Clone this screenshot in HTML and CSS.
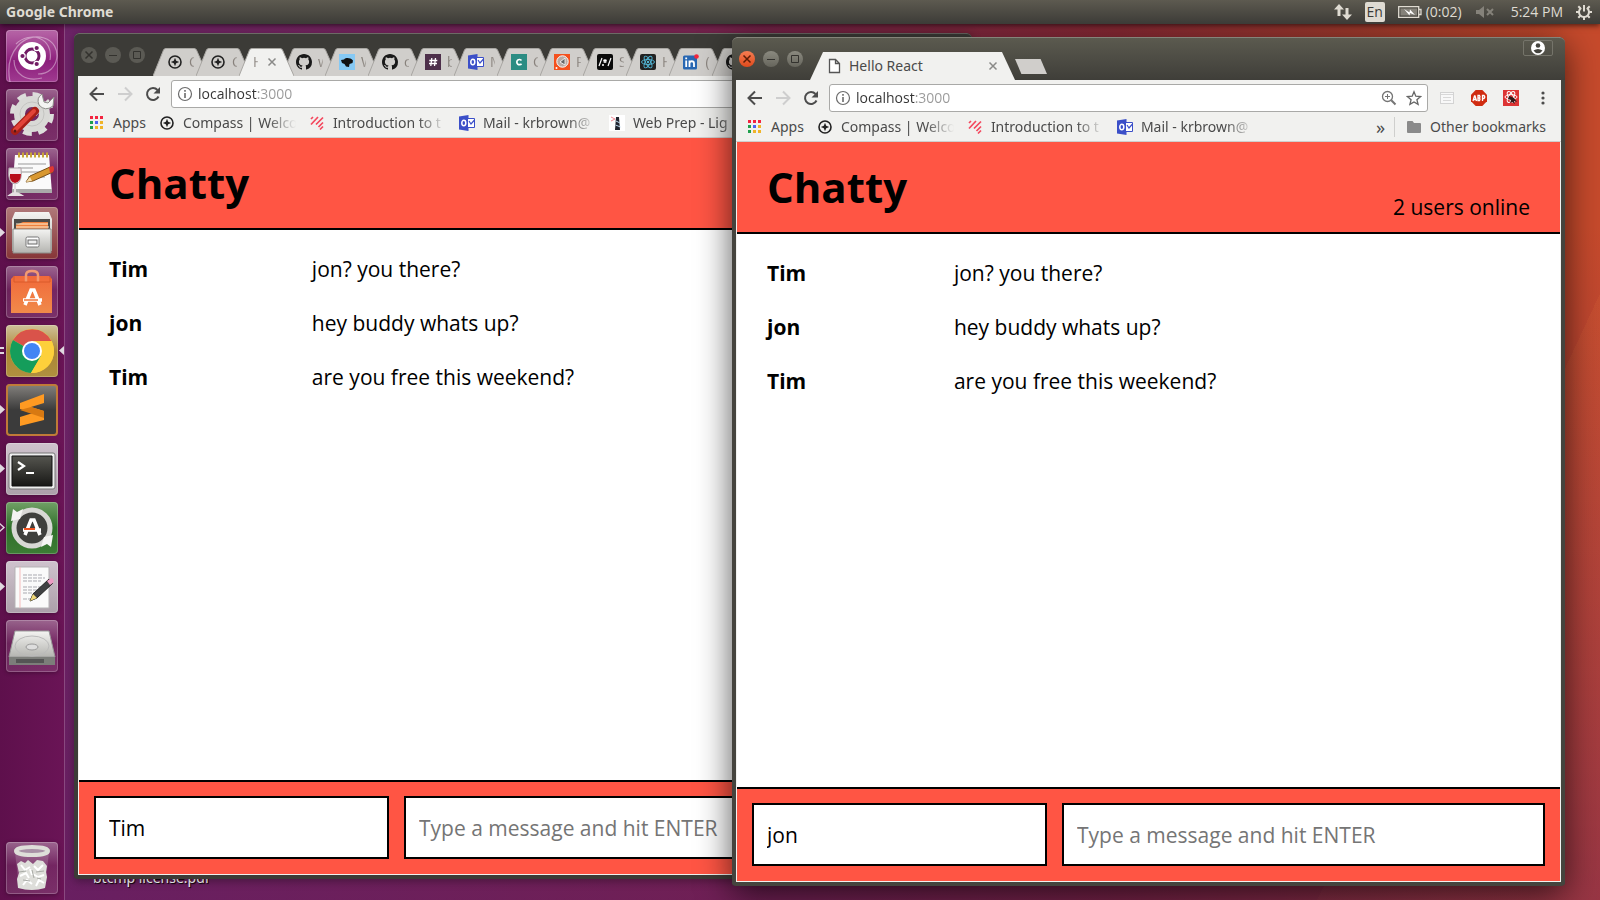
FILE: index.html
```html
<!DOCTYPE html>
<html lang="en">
<head>
<meta charset="utf-8">
<title>Desktop</title>
<link rel="stylesheet" href="styles.css">
</head>
<body>
<svg class="defs" aria-hidden="true">
  <defs>
    <linearGradient id="metal" x1="0" y1="0" x2="0" y2="1"><stop offset="0" stop-color="#f4f4f2"/><stop offset="1" stop-color="#b4b4b0"/></linearGradient>
    <linearGradient id="orange" x1="0" y1="0" x2="0" y2="1"><stop offset="0" stop-color="#f1693a"/><stop offset="1" stop-color="#f08a4a"/></linearGradient>
    <linearGradient id="screen" x1="0" y1="0" x2="0" y2="1"><stop offset="0" stop-color="#55554f"/><stop offset="1" stop-color="#181816"/></linearGradient>
  </defs>
  <symbol id="i-close" viewBox="0 0 16 16"><path d="M4.5 4.500l7 7M11.500 4.500l-7 7" stroke="currentColor" stroke-width="1.500" fill="none"/></symbol>
  <symbol id="i-min" viewBox="0 0 16 16"><path d="M4 8.500h8" stroke="currentColor" fill="none"/></symbol>
  <symbol id="i-max" viewBox="0 0 16 16"><path d="M4.500 4.500h7v7h-7z" stroke="currentColor" fill="none"/></symbol>
  <symbol id="i-back" viewBox="0 0 16 16"><path d="M15 8H2M8 1.500L1.500 8 8 14.500" stroke="currentColor" stroke-width="2" fill="none"/></symbol>
  <symbol id="i-fwd" viewBox="0 0 16 16"><path d="M1 8h13M8 1.500L14.500 8 8 14.500" stroke="currentColor" stroke-width="2" fill="none"/></symbol>
  <symbol id="i-reload" viewBox="0 0 16 16"><path d="M13.500 10.500A6 6 0 1 1 12.500 4" stroke="currentColor" stroke-width="2" fill="none"/><path d="M15 1v6.500H8.500z" fill="currentColor"/></symbol>
  <symbol id="i-info" viewBox="0 0 16 16"><circle cx="8" cy="8" r="6.500" stroke="#6b6b6b" fill="none" stroke-width="1.200"/><path d="M8 7v5M8 4v1.800" stroke="#6b6b6b" stroke-width="1.600"/></symbol>
  <symbol id="i-apps" viewBox="0 0 16 16"><path d="M1 1h3v3h-3zM6 1h3v3h-3zM11 1h3v3h-3z" fill="#f3243f"/><path d="M1 6h3v3h-3zM1 11h3v3h-3z" fill="#1fa04d"/><path d="M6 6h3v3h-3z" fill="#4d62f0"/><path d="M11 6h3v3h-3zM6 11h3v3h-3zM11 11h3v3h-3z" fill="#f0b429"/></symbol>
  <symbol id="i-compass" viewBox="0 0 16 16"><circle cx="8" cy="8" r="6" stroke="#222" stroke-width="1.600" fill="none"/><path d="M8 3.800l1.200 3L12.200 8l-3 1.200L8 12.200 6.800 9.200 3.800 8l3-1.200z" fill="#222"/></symbol>
  <symbol id="i-intro" viewBox="0 0 16 16"><path d="M2 4l2-2M2 9.500L9 2M7 9.500l7-7M9.500 12l4.500-4.500M7 9.500l1-1M11 14.500l3-3" stroke="#f4485e" stroke-width="1.700" fill="none"/></symbol>
  <symbol id="i-mail" viewBox="0 0 16 16"><path d="M0 1.500L9.500 0v16L0 14.500z" fill="#3b4fc8"/><ellipse cx="4.800" cy="8" rx="2" ry="2.700" stroke="#fff" stroke-width="1.500" fill="none"/><path d="M9 3.500h6.500v9H9" stroke="#3b4fc8" fill="#fff"/><path d="M10 6l2 3 3.500-4" stroke="#3b4fc8" stroke-width="1.200" fill="none"/></symbol>
  <symbol id="i-prep" viewBox="0 0 16 16"><path d="M0 0h16v16H0z" fill="#fff"/><path d="M7 2h3l1 13h-5z" fill="#20242e"/><path d="M7 6l4 2M6.500 10l5 2" stroke="#b9d6ea"/><path d="M2 2l4 2-4 2" stroke="#f08a96" fill="none"/></symbol>
  <symbol id="i-github" viewBox="0 0 16 16"><path fill="#191919" d="M8 0C3.580 0 0 3.580 0 8c0 3.540 2.290 6.530 5.470 7.590.4.070.550-.170.550-.380 0-.190-.010-.820-.010-1.490-2.010.370-2.530-.490-2.690-.940-.090-.230-.480-.940-.820-1.130-.280-.150-.680-.520-.010-.530.630-.010 1.080.580 1.230.820.720 1.210 1.870.870 2.330.660.070-.520.280-.870.510-1.070-1.780-.200-3.640-.890-3.640-3.950 0-.870.310-1.590.820-2.150-.080-.200-.360-1.020.080-2.120 0 0 .670-.210 2.200.820a7.600 7.600 0 0 1 4 0c1.530-1.040 2.200-.820 2.200-.820.440 1.100.160 1.920.080 2.120.510.560.820 1.270.820 2.150 0 3.070-1.870 3.750-3.650 3.950.290.250.540.730.540 1.480 0 1.070-.010 1.930-.010 2.200 0 .210.150.460.550.380A8.010 8.010 0 0 0 16 8c0-4.420-3.580-8-8-8z"/></symbol>
  <symbol id="i-bird" viewBox="0 0 16 16"><path d="M0 0h16v16H0z" fill="#86c9f4"/><path d="M2 6l3-.500c2-2 6-2 9 1l-.500 2.500-3 1-.500 3-3-.500L5.500 10 3 9z" fill="#111"/></symbol>
  <symbol id="i-slack" viewBox="0 0 16 16"><path d="M0 0h16v16H0z" fill="#4d2f4a"/><path d="M6.800 4l-1 8M10.500 4l-1 8M4.300 6.500h8M4 9.500h8" stroke="#fff" stroke-width="1.300"/></symbol>
  <symbol id="i-codecademy" viewBox="0 0 16 16"><path d="M0 0h16v16H0z" fill="#2b8c83"/><path d="M10.500 6.500A2.600 2.600 0 1 0 10.500 9.700" stroke="#fff" stroke-width="1.700" fill="none"/></symbol>
  <symbol id="i-postman" viewBox="0 0 16 16"><path d="M0 0h16v16H0z" fill="#f4511e"/><circle cx="8.500" cy="7.500" r="5.700" fill="#b8aaa3" stroke="#fff"/><path d="M11 4L6 8l5 3z" fill="#666" stroke="#fff" stroke-width=".8"/><circle cx="2.500" cy="14" r="1" fill="#fff"/></symbol>
  <symbol id="i-regex" viewBox="0 0 16 16"><rect width="16" height="16" rx="2" fill="#0a0a0a"/><path d="M2 12L5 4M11 12l3-8M8 5v4M6.300 6l3.400 2M9.700 6L6.300 8" stroke="#fff" stroke-width="1.200"/><circle cx="6" cy="11" r="1" fill="#fff"/></symbol>
  <symbol id="i-react" viewBox="0 0 16 16"><rect width="16" height="16" rx="2" fill="#222"/><g stroke="#52b8d8" fill="none" stroke-width=".9"><ellipse cx="8" cy="8" rx="6.500" ry="2.500"/><ellipse cx="8" cy="8" rx="6.500" ry="2.500" transform="rotate(60 8 8)"/><ellipse cx="8" cy="8" rx="6.500" ry="2.500" transform="rotate(120 8 8)"/></g><circle cx="8" cy="8" r="1.200" fill="#52b8d8"/></symbol>
  <symbol id="i-linkedin" viewBox="0 0 16 16"><rect y="1.500" width="14" height="14" rx="1.500" fill="#2867b2"/><path d="M3.200 6.500V13M3.200 3.500v1.700M6.500 13V6.500M6.500 9.500c0-3 4.500-3 4.500 0V13" stroke="#fff" stroke-width="1.800" fill="none"/><circle cx="13.500" cy="2.500" r="2.300" fill="#f3263c"/></symbol>
  <symbol id="i-page" viewBox="0 0 16 16"><path d="M3.500 1.500h6l4 4v9h-10zM9.500 1.500v4h4" fill="#fff" stroke="#555" stroke-width="1.300"/></symbol>
  <symbol id="i-zoom" viewBox="0 0 16 16"><circle cx="6.500" cy="6.500" r="5" stroke="#757575" stroke-width="1.300" fill="none"/><path d="M10.300 10.300l4.200 4.200" stroke="#757575" stroke-width="2"/><path d="M6.500 4v5M4 6.500h5" stroke="#757575"/></symbol>
  <symbol id="i-star" viewBox="0 0 16 16"><path d="M8 1.800l1.800 4.400 4.800.4-3.700 3.100 1.200 4.700L8 11.900l-4.100 2.500 1.200-4.700L1.400 6.600l4.800-.4z" stroke="#666" stroke-width="1.300" fill="none"/></symbol>
  <symbol id="i-list" viewBox="0 0 16 16"><rect x="1.500" y="2.500" width="13" height="11" fill="#f8f8f8" stroke="#d3d3d3"/><path d="M2 4.500h12M4 7.500h8M4 10.500h8" stroke="#d8d8d8"/></symbol>
  <symbol id="i-abp" viewBox="0 0 16 16"><path d="M4.700 0h6.600L16 4.700v6.600L11.300 16H4.700L0 11.300V4.700z" fill="#d02c10"/><path d="M2 11l1.500-5h.5l1.500 5M2.500 9.500h2.500M7 5.500v5h1.500q1-1.300 0-2.500 1-1.200 0-2.500zM7 8h1.500M11.500 11V5.500h1.500q1.500 1.500 0 3h-1.500" stroke="#fff" stroke-width="1.300" fill="none"/></symbol>
  <symbol id="i-dev" viewBox="0 0 16 16"><path d="M0 0h16v16H0z" fill="#dd3434"/><g stroke="#fff" fill="none"><ellipse cx="8" cy="7" rx="6" ry="2.400"/><ellipse cx="8" cy="7" rx="6" ry="2.400" transform="rotate(60 8 7)"/><ellipse cx="8" cy="7" rx="6" ry="2.400" transform="rotate(120 8 7)"/></g><path d="M6 6l3 1 2 1 3 4-3-1 1 3-3-2-2 1 1-3-3-1z" fill="#331a1a"/></symbol>
  <symbol id="i-dots" viewBox="0 0 16 16"><g fill="#4c4c4c"><circle cx="8" cy="3" r="1.600"/><circle cx="8" cy="8" r="1.600"/><circle cx="8" cy="13" r="1.600"/></g></symbol>
  <symbol id="i-folder" viewBox="0 0 16 16"><path d="M1 3q0-1 1-1h4.500L8 4h6q1 0 1 1v8q0 1-1 1H2q-1 0-1-1z" fill="#8a8a8a"/></symbol>
  <symbol id="i-user" viewBox="0 0 16 16"><circle cx="8" cy="8" r="7" fill="#fff"/><circle cx="8" cy="5.500" r="2.300" fill="#45443e"/><path d="M3.500 10.500q4.500-3 9 0-1.800 2.800-4.500 2.800t-4.500-2.800z" fill="#45443e"/></symbol>
  <symbol id="tab" viewBox="0 0 55 28" preserveAspectRatio="none"><path d="M0 28L10.500 2Q11 .500 13 .500H41Q43 .500 43.500 2L55 28" fill="currentColor" stroke="#a8a6a2"/></symbol>
</svg>

<header class="panel">
  <strong class="panel-title">Google Chrome</strong>
  <div class="indicators">
    <svg class="net" viewBox="0 0 18 16"><path d="M5 0l5 5.500H6.500V12h-3V5.500H0zM13 16l-5-5.500h3.500V4h3v6.500H18z" fill="#dfdbd2"/></svg>
    <span class="lang">En</span>
    <span class="power"><svg viewBox="0 0 24 12"><path d="M.700 .700h20v10.600h-20zM21 3.500h2v5h-2" fill="none" stroke="#dfdbd2" stroke-width="1.300"/><path d="M2.500 2.500h16.500v7H2.500z" fill="#85827a"/><path d="M6 3l5.500 3.500L12 3.500 17 9l-5-2-.500 2.500z" fill="#fff"/></svg>(0:02)</span>
    <svg class="vol" viewBox="0 0 18 12"><path d="M0 4h3l5-4v12L3 8H0z" fill="#85827a"/><path d="M11 3l6 6M17 3l-6 6" stroke="#85827a" stroke-width="2"/></svg>
    <time>5:24 PM</time>
    <svg class="gear" viewBox="0 0 16 16"><path d="M5.200 3.900a5 5 0 1 0 5.600 0" stroke="#dfdbd2" stroke-width="2" fill="none"/><path d="M8 1v6.500M0 8h3M13 8h3M8 13v3M2.300 2.300l2 2M13.700 2.300l-2 2M2.300 13.700l2-2M13.700 13.700l-2-2" stroke="#dfdbd2" stroke-width="2"/></svg>
  </div>
</header>

<main class="desktop">
  <nav class="launcher" aria-label="Launcher">
    <button class="tile dash" aria-label="Dash"><svg viewBox="0 0 52 52"><path d="M4 52C-2 22 18 2 38 8s16 36-6 36M10 14c14-14 38-6 34 16M8 30c0 14 12 22 28 18" stroke="#ffffff66" stroke-width="1.200" fill="none"/><circle cx="26" cy="26" r="14" fill="#fff"/><circle cx="26" cy="26" r="7" fill="none" stroke="#711a63" stroke-width="3"/><g stroke="#fff" stroke-width="1.200" fill="#711a63"><circle cx="16.500" cy="26" r="2.700"/><circle cx="30.700" cy="18" r="2.700"/><circle cx="30.700" cy="34" r="2.700"/></g></svg></button>
    <button class="tile" aria-label="System Settings"><svg viewBox="0 0 52 52"><circle cx="26" cy="25" r="19" fill="none" stroke="#dddddb" stroke-width="6" stroke-dasharray="8.500 6.420"/><circle cx="26" cy="25" r="12.500" fill="none" stroke="#d9d9d6" stroke-width="11"/><circle cx="26" cy="25" r="12" fill="none" stroke="#c4c4c1"/><path d="M28 25L38 14" stroke="#d5d5d2" stroke-width="6"/><path d="M36 5q-6 4-3 11 6 7 14 1l1-9-6 6-4-1-1-4z" fill="#f3f3f1" stroke="#8e8e8a"/><path d="M9 42L29 22" stroke="#a81f16" stroke-width="8" stroke-linecap="round"/><path d="M9 41L28 22" stroke="#e24438" stroke-width="4" stroke-linecap="round"/><circle cx="9" cy="42" r="1.500" fill="#591812"/></svg></button>
    <button class="tile" aria-label="Notes"><svg viewBox="0 0 52 52"><path d="M9 7h34l3 38H6z" fill="#fafafa"/><path d="M6 41h40v4H6z" fill="#aaa"/><path d="M12 7h31" stroke="#c8a537" stroke-width="5" stroke-dasharray="2 2"/><path d="M12 16h28M12 20h15M12 24h28M22 29h17" stroke="#999"/><path d="M20 34l4-6 20-9 3 5-20 9z" fill="#d99830" stroke="#784f18"/><path d="M43 19l4-1q2 3 0 6l-3 1z" fill="#e03830"/><path d="M20 34l4-5 2 4z" fill="#f5deae"/><path d="M3 20h12q2 15-6 16-8-1-6-16z" fill="#f1e9ec" stroke="#ada3a8"/><path d="M4 26h11q0 8-6 9-6-1-5-9z" fill="#b80d1a"/><path d="M9 36v9M4 47q5-4 11 0z" stroke="#e6e0e2" stroke-width="2" fill="#e6e0e2"/></svg></button>
    <button class="tile files" aria-label="Files"><i class="run"></i><svg viewBox="0 0 52 52"><path d="M9 5h34l3 7v32H6V12z" fill="url(#metal)"/><path d="M8 12h36v15H8z" fill="#4d4b48"/><path d="M10 18l7-3h25v11H10z" fill="#ef803c"/><path d="M10 17h32M10 20h33" stroke="#fff5d8"/><path d="M7 22h38v24H7z" fill="url(#metal)" stroke="#8c8c88"/><rect x="20" y="30" width="13" height="10" rx="1.500" fill="#fff" stroke="#777"/><rect x="22" y="33" width="9" height="4" fill="#eee" stroke="#666"/></svg></button>
    <button class="tile" aria-label="Ubuntu Software"><svg viewBox="0 0 52 52"><path d="M5 13l3-3h35l3 3v34H5z" fill="url(#orange)"/><path d="M20 16V9q0-4 6-4t6 4v7" fill="none" stroke="#f49a70" stroke-width="2.500"/><path d="M8 10v6h36v-6" stroke="#d95a2a" fill="none"/><path d="M19 39l6-15h3l6 15M17 34h19" stroke="#fff" stroke-width="3.500" fill="none"/><path d="M18 34h14" stroke="#f1743d" stroke-width="1.500"/></svg></button>
    <button class="tile chrome" aria-label="Google Chrome"><i class="multi"></i><svg viewBox="0 0 52 52"><circle cx="26" cy="26" r="22" fill="#fdd03b"/><path d="M26 26L7 15a22 22 0 0 1 38.500 1H26z" fill="#d9534a"/><path d="M26 26L35 31 25 48A22 22 0 0 1 7 15z" fill="#159d5b"/><path d="M26 16h19.500A22 22 0 0 1 25 48l10-17z" fill="#fdd03b"/><circle cx="26" cy="26" r="10" fill="#fff"/><circle cx="26" cy="26" r="8" fill="#4285f4"/></svg><i class="focus"></i></button>
    <button class="tile sublime" aria-label="Sublime Text"><i class="run"></i><svg viewBox="0 0 52 52"><path d="M14 19l24-9v9l-13 4 13 4v9l-24 6v-9l13-4-13-4z" fill="#ff9a22"/><path d="M25 23l13 4v7L14 26z" fill="#d87912"/></svg></button>
    <button class="tile pale" aria-label="Terminal"><i class="run"></i><svg viewBox="0 0 52 52"><rect x="3" y="10" width="46" height="36" rx="2" fill="#eee" stroke="#777"/><path d="M6 13h40v30H6z" fill="url(#screen)" stroke="#111"/><path d="M12 19l6 4-6 4M20 30h8" stroke="#fff" stroke-width="2.200" fill="none"/></svg></button>
    <button class="tile updater" aria-label="Software Updater"><i class="run hollow"></i><svg viewBox="0 0 52 52"><circle cx="26" cy="26" r="18" fill="#3f403d" stroke="#d8d8d5" stroke-width="5"/><path d="M5 19l2-12 4 3 6-3-3 10zM47 33l-2 12-4-3-6 3 3-10z" fill="#f5f5f3"/><path d="M19 33l6-15h3l6 15M17 28h18" stroke="#fff" stroke-width="3.500" fill="none"/><path d="M18 27h11" stroke="#ef5522" stroke-width="2"/></svg></button>
    <button class="tile pale" aria-label="Text Editor"><i class="run"></i><svg viewBox="0 0 52 52"><path d="M9 6h34v41H9z" fill="#fafafa" stroke="#b5b3b5"/><path d="M14 6v41" stroke="#f5bcbc"/><path d="M17 14h20M17 17h22M17 20h18M17 26h21M17 29h20M17 32h16M17 38h9" stroke="#a9a9b0" stroke-dasharray="4 1"/><path d="M24 40l3-7 16-15 4 4-16 15z" fill="#3f4042" stroke="#222"/><path d="M41 20l4-3q4 1 2 5l-3 2z" fill="#ec9dc4"/><path d="M24 40l3-7 4 4z" fill="#f0d878"/></svg></button>
    <button class="tile" aria-label="Disk"><svg viewBox="0 0 52 52"><path d="M9 11h34l6 26H3z" fill="url(#metal)" stroke="#999"/><ellipse cx="26" cy="26" rx="17" ry="10" fill="none" stroke="#bbb"/><ellipse cx="26" cy="27" rx="6" ry="3" fill="#ddd" stroke="#999"/><path d="M3 37h46v8H3z" fill="#7c7e7a"/><path d="M10 39h28v4H10z" fill="#555"/></svg></button>
    <button class="tile trash" aria-label="Trash"><svg viewBox="0 0 52 52"><path d="M9 10l4 36q13 4 26 0l4-36z" fill="#ffffff28"/><path d="M11 22l4-3 4 2 3-3 5 4 4-4 6 1 4 5-1 6 1 5-2 11q-13 4-27 0l-1-9 2-6z" fill="#dededa"/><path d="M15 23l4 5 5-3M28 24l4 4 5-5M14 34l6-3 3 5M27 32l5 3 6-2M17 43l4-5 5 4M30 44l3-6 5 3M24 27l2 6" stroke="#fff" stroke-width="2" fill="none"/><path d="M13 30l7-1M26 28l2 8M30 30l8-1M17 38l7 1M31 36l4 1" stroke="#a8aaa5" fill="none"/><ellipse cx="26" cy="9" rx="16" ry="4" fill="#a890a6" stroke="#deded9" stroke-width="4"/></svg></button>
  </nav>
  <span class="desk-file">btcmp license.pdf</span>

  <section class="window back" aria-label="Chatty as Tim">
    <div class="titlebar">
      <div class="controls">
        <button aria-label="Close"><svg><use href="#i-close"/></svg></button><button aria-label="Minimize"><svg><use href="#i-min"/></svg></button><button aria-label="Maximize"><svg><use href="#i-max"/></svg></button>
      </div>
      <div class="tabs">
        <button class="tab"><svg class="shape"><use href="#tab"/></svg><svg class="ico"><use href="#i-compass"/></svg><span>C</span></button>
        <button class="tab"><svg class="shape"><use href="#tab"/></svg><svg class="ico"><use href="#i-compass"/></svg><span>C</span></button>
        <button class="tab on"><svg class="shape"><use href="#tab"/></svg><span>H</span><svg class="x"><use href="#i-close"/></svg></button>
        <button class="tab"><svg class="shape"><use href="#tab"/></svg><svg class="ico"><use href="#i-github"/></svg><span>w</span></button>
        <button class="tab"><svg class="shape"><use href="#tab"/></svg><svg class="ico"><use href="#i-bird"/></svg><span>W</span></button>
        <button class="tab"><svg class="shape"><use href="#tab"/></svg><svg class="ico"><use href="#i-github"/></svg><span>c</span></button>
        <button class="tab"><svg class="shape"><use href="#tab"/></svg><svg class="ico"><use href="#i-slack"/></svg><span>b</span></button>
        <button class="tab"><svg class="shape"><use href="#tab"/></svg><svg class="ico"><use href="#i-mail"/></svg><span>M</span></button>
        <button class="tab"><svg class="shape"><use href="#tab"/></svg><svg class="ico"><use href="#i-codecademy"/></svg><span>C</span></button>
        <button class="tab"><svg class="shape"><use href="#tab"/></svg><svg class="ico"><use href="#i-postman"/></svg><span>P</span></button>
        <button class="tab"><svg class="shape"><use href="#tab"/></svg><svg class="ico"><use href="#i-regex"/></svg><span>S</span></button>
        <button class="tab"><svg class="shape"><use href="#tab"/></svg><svg class="ico"><use href="#i-react"/></svg><span>H</span></button>
        <button class="tab"><svg class="shape"><use href="#tab"/></svg><svg class="ico"><use href="#i-linkedin"/></svg><span>(</span></button>
        <button class="tab"><svg class="shape"><use href="#tab"/></svg><svg class="ico"><use href="#i-github"/></svg></button>
      </div>
    </div>
    <div class="toolbar">
      <button class="nav" aria-label="Back"><svg><use href="#i-back"/></svg></button><button class="nav off" aria-label="Forward"><svg><use href="#i-fwd"/></svg></button><button class="nav" aria-label="Reload"><svg><use href="#i-reload"/></svg></button>
      <label class="address"><svg><use href="#i-info"/></svg><input aria-label="Address" value="localhost:3000"></label>
    </div>
    <div class="bookmarks">
      <a href="#"><svg><use href="#i-apps"/></svg>Apps</a>
      <a href="#"><svg><use href="#i-compass"/></svg><span>Compass | Welco</span></a>
      <a href="#"><svg><use href="#i-intro"/></svg><span>Introduction to t</span></a>
      <a href="#"><svg><use href="#i-mail"/></svg><span>Mail - krbrown@</span></a>
      <a href="#"><svg><use href="#i-prep"/></svg><span>Web Prep - Lig</span></a>
    </div>
    <div class="page">
      <header class="chat-head"><h1>Chatty</h1></header>
      <ul class="messages">
        <li><b>Tim</b><span>jon? you there?</span></li>
        <li><b>jon</b><span>hey buddy whats up?</span></li>
        <li><b>Tim</b><span>are you free this weekend?</span></li>
      </ul>
      <footer class="chat-bar"><input class="who" aria-label="Your name" value="Tim"><input class="msg" aria-label="Message" placeholder="Type a message and hit ENTER"></footer>
    </div>
  </section>

  <section class="window front" aria-label="Chatty as jon">
    <div class="titlebar">
      <div class="controls">
        <button aria-label="Close" class="close"><svg><use href="#i-close"/></svg></button><button aria-label="Minimize"><svg><use href="#i-min"/></svg></button><button aria-label="Maximize"><svg><use href="#i-max"/></svg></button>
      </div>
      <div class="tabs">
        <button class="tab wide"><svg class="ico"><use href="#i-page"/></svg><span>Hello React</span><svg class="x"><use href="#i-close"/></svg></button>
        <button class="newtab" aria-label="New tab"></button>
      </div>
      <button class="profile" aria-label="Profile"><svg><use href="#i-user"/></svg></button>
    </div>
    <div class="toolbar">
      <button class="nav" aria-label="Back"><svg><use href="#i-back"/></svg></button><button class="nav off" aria-label="Forward"><svg><use href="#i-fwd"/></svg></button><button class="nav" aria-label="Reload"><svg><use href="#i-reload"/></svg></button>
      <label class="address"><svg><use href="#i-info"/></svg><input aria-label="Address" value="localhost:3000"><svg><use href="#i-zoom"/></svg><svg><use href="#i-star"/></svg></label>
      <button class="ext" aria-label="Extension"><svg><use href="#i-list"/></svg></button><button class="ext" aria-label="Adblock"><svg><use href="#i-abp"/></svg></button><button class="ext" aria-label="Devtools"><svg><use href="#i-dev"/></svg></button><button class="ext" aria-label="Menu"><svg><use href="#i-dots"/></svg></button>
    </div>
    <div class="bookmarks">
      <a href="#"><svg><use href="#i-apps"/></svg>Apps</a>
      <a href="#"><svg><use href="#i-compass"/></svg><span>Compass | Welco</span></a>
      <a href="#"><svg><use href="#i-intro"/></svg><span>Introduction to t</span></a>
      <a href="#"><svg><use href="#i-mail"/></svg><span>Mail - krbrown@</span></a>
      <button class="more">»</button>
      <a href="#" class="other"><svg><use href="#i-folder"/></svg>Other bookmarks</a>
    </div>
    <div class="page">
      <header class="chat-head"><h1>Chatty</h1><p>2 users online</p></header>
      <ul class="messages">
        <li><b>Tim</b><span>jon? you there?</span></li>
        <li><b>jon</b><span>hey buddy whats up?</span></li>
        <li><b>Tim</b><span>are you free this weekend?</span></li>
      </ul>
      <footer class="chat-bar"><input class="who" aria-label="Your name" value="jon"><input class="msg" aria-label="Message" placeholder="Type a message and hit ENTER"></footer>
    </div>
  </section>
</main>
</body>
</html>
```
FILE: styles.css
```css
* { box-sizing: border-box; }
body {
  margin: 0;
  height: 100vh;
  display: flex;
  flex-direction: column;
  overflow: hidden;
  font: 14px/20px "Open Sans", "Noto Sans", sans-serif;
  color: #4a4a4a;
  background:
    linear-gradient(to bottom, rgba(110, 30, 90, 0) 25%, rgba(100, 26, 90, .5) 100%),
    linear-gradient(115deg, transparent 86%, rgba(255, 140, 60, .1) 86%),
    linear-gradient(90deg, #6d2468 4%, #7a2550 45%, #8a2a35 70%, #a03a2e 84%, #c64a2c 98%);
}
button { font: inherit; color: inherit; border: 0; padding: 0; background: none; }
input { font: inherit; outline: 0; min-width: 0; }
a { color: inherit; text-decoration: none; }
svg { display: block; flex: none; width: 16px; height: 16px; }
.defs { position: absolute; width: 0; height: 0; }

.panel {
  position: relative;
  height: 24px;
  flex: none;
  display: flex;
  align-items: center;
  justify-content: space-between;
  padding: 0 8px 0 6px;
  color: #dfdbd2;
  background: linear-gradient(#5d5a50, #3c3b37);
  box-shadow: 0 1px 6px rgba(0, 0, 0, .7);
  z-index: 1;
}
.panel-title { font: bold 14px/20px "Noto Sans", sans-serif; }
.indicators { display: flex; align-items: center; }
.net { width: 18px; margin-right: 13px; }
.lang {
  width: 20px;
  height: 20px;
  margin-right: 13px;
  border-radius: 2px;
  background: #dfdbd2;
  color: #3c3b37;
  text-align: center;
}
.power { display: flex; align-items: center; gap: 4px; margin-right: 14px; }
.power svg { width: 24px; height: 12px; }
.vol { width: 18px; height: 12px; margin-right: 17px; }
.indicators time { margin-right: 13px; }

.desktop { flex: 1; display: flex; min-height: 0; }
.launcher {
  width: 65px;
  display: flex;
  flex-direction: column;
  gap: 7px;
  padding: 6px;
  background: linear-gradient(90deg, #5e104c, #6a1456);
  border-right: 1px solid #8a4a80;
}
.tile {
  position: relative;
  width: 52px;
  height: 52px;
  border-radius: 4px;
  background: linear-gradient(rgba(255, 255, 255, .35), rgba(255, 255, 255, .08) 45%, rgba(255, 255, 255, .12));
  box-shadow: inset 0 0 0 1px rgba(255, 255, 255, .22), 0 1px 4px rgba(0, 0, 0, .3);
}
.tile > svg { width: 52px; height: 52px; }
.dash { background: linear-gradient(#b867a8, #8c1f7c 60%, #a03a90); }
.files { background: linear-gradient(#b0797a, #863537); }
.chrome { background: linear-gradient(#cfc09a, #ab8735 50%, #b0903f); }
.sublime { background: linear-gradient(#85827e, #3b3b3b 50%); box-shadow: inset 0 0 0 2px #c07a38; }
.pale { background: linear-gradient(#cfc3cd, #aca0aa); }
.updater { background: linear-gradient(#71a066, #2f6f2a 50%, #3c7c35); }
.trash { margin-top: auto; }
.run, .focus, .multi { position: absolute; top: 21px; }
.run { left: -6px; width: 5px; height: 9px; background: #e0d9e0; clip-path: polygon(0 0, 100% 50%, 0 100%); }
.hollow { clip-path: polygon(0 0, 100% 50%, 0 100%, 0 80%, 60% 50%, 0 20%); }
.focus { right: -6px; width: 5px; height: 9px; background: #e0d9e0; clip-path: polygon(100% 0, 0 50%, 100% 100%); }
.multi { left: -6px; top: 22px; width: 4px; height: 7px; border: solid #e0d9e0; border-width: 2px 0; }

.desk-file {
  position: absolute;
  left: 93px;
  bottom: 12px;
  color: #fff;
  font-family: "Noto Sans", sans-serif;
  text-shadow: 1px 1px 1px #000;
}

.window {
  position: absolute;
  display: flex;
  flex-direction: column;
  border: solid #45443e;
  border-width: 0 4px 4px;
  border-radius: 6px 6px 4px 4px;
  background: #f1f1ef;
}
.back {
  left: 74px;
  top: 33px;
  right: 628px;
  bottom: 21px;
  border-color: #3c3b37;
  box-shadow: 0 2px 10px rgba(0, 0, 0, .35);
}
.front {
  left: 732px;
  top: 37px;
  right: 35px;
  bottom: 14px;
  box-shadow: 0 8px 34px rgba(0, 0, 0, .65);
}
.titlebar {
  height: 43px;
  flex: none;
  display: flex;
  align-items: flex-end;
  margin: 0 -4px;
  padding: 0 12px 0 7px;
  border-radius: 6px 6px 0 0;
  border-top: 1px solid #6d6b66;
  background: #3c3b37;
}
.front .titlebar { background: linear-gradient(#5b5a4f, #3f3e39); border-color: #85847a; }
.controls { display: flex; gap: 8px; padding-bottom: 13px; }
.controls button { width: 16px; height: 16px; border-radius: 50%; background: #5b5a54; color: #33322e; }
.front .controls button { background: linear-gradient(#8b8a80, #66655c); }
.front .controls .close { background: linear-gradient(#f57d52, #df4a1c); color: #5a1c06; }
.tabs { display: flex; align-items: flex-end; min-width: 0; overflow: hidden; }
.back .tabs { padding-left: 8px; }
.back .titlebar { padding-right: 150px; }
.tab {
  position: relative;
  flex: none;
  display: flex;
  align-items: center;
  gap: 6px;
  width: 55px;
  height: 28px;
  margin-right: -12px;
  padding-left: 14px;
}
.tab > * { position: relative; }
.tab .shape { position: absolute; inset: 0; width: 55px; height: 28px; color: #d0cecb; }
.tab span {
  width: 5px;
  overflow: hidden;
  color: #77706a;
  -webkit-mask-image: linear-gradient(90deg, #000, rgba(0, 0, 0, .4));
  mask-image: linear-gradient(90deg, #000, rgba(0, 0, 0, .4));
}
.tab .x { color: #8a8a88; }
.tab.on { z-index: 1; gap: 6px; }
.tab.on .shape { color: #f1f1ef; }
.tab.wide {
  width: 205px;
  margin: 0 0 0 7px;
  padding: 0 14px 0 16px;
  gap: 7px;
  background: #f1f1ef;
  clip-path: polygon(0 100%, 13px 0, 192px 0, 100% 100%);
}
.tab.wide span {
  flex: 1;
  text-align: left;
  color: #4a4a4a;
  font-family: "Noto Sans", sans-serif;
  -webkit-mask-image: none;
  mask-image: none;
}
.newtab {
  width: 32px;
  height: 15px;
  margin-bottom: 6px;
  background: #d0cecb;
  clip-path: polygon(0 0, 80% 0, 100% 100%, 20% 100%);
}
.profile {
  width: 30px;
  height: 16px;
  margin: 0 0 24px auto;
  border: 1px solid #75746a;
  border-radius: 2px;
  display: flex;
  align-items: center;
  justify-content: center;
}

.toolbar { display: flex; align-items: center; padding: 4px 2px 0 5px; }
.nav, .ext { display: flex; align-items: center; justify-content: center; width: 28px; height: 28px; color: #4c4c4c; }
.ext { width: 32px; }
.nav.off { color: #cecece; }
.address {
  flex: 1;
  display: flex;
  align-items: center;
  gap: 9px;
  height: 28px;
  margin: 0 3px 0 4px;
  padding: 0 5px;
  border: 1px solid #a9a9a7;
  border-radius: 3px;
  background: #fff;
}
.address input {
  flex: 1;
  border: 0;
  padding: 0;
  margin-left: -4px;
  color: transparent;
  background: linear-gradient(90deg, #333 59px, #999 59px);
  -webkit-background-clip: text;
  background-clip: text;
}
.bookmarks {
  display: flex;
  align-items: center;
  gap: 13px;
  height: 30px;
  padding: 1px 15px 0 11px;
  border-bottom: 1px solid #cfcfcd;
  font-family: "Noto Sans", sans-serif;
  white-space: nowrap;
  overflow: hidden;
}
.bookmarks a { display: flex; align-items: center; gap: 8px; }
.bookmarks a span {
  width: 113px;
  overflow: hidden;
  -webkit-mask-image: linear-gradient(90deg, #000 75%, transparent);
  mask-image: linear-gradient(90deg, #000 75%, transparent);
}
.more { margin-left: auto; font-size: 18px; }
.bookmarks .other { margin-left: -4px; padding-left: 11px; border-left: 1px solid #cfcfcd; }

.page {
  flex: 1;
  display: flex;
  flex-direction: column;
  margin: 0 1px 1px;
  background: #fff;
  color: #000;
  font-size: 21px;
  line-height: 30px;
}
.chat-head {
  display: flex;
  justify-content: space-between;
  align-items: flex-end;
  height: 92px;
  padding: 0 30px 10px;
  border-bottom: 2px solid #000;
  background: #ff5544;
}
.chat-head h1 { margin: 0; font-size: 42px; line-height: 70px; }
.chat-head p { margin: 0; }
.messages { flex: 1; margin: 0; padding: 24px 30px; list-style: none; display: flex; flex-direction: column; gap: 24px; }
.messages li { display: flex; }
.messages b { flex: 0 0 24.5%; }
.chat-bar { display: flex; gap: 15px; padding: 14px 15px 15px; border-top: 2px solid #000; background: #ff5544; }
.chat-bar input { height: 63px; border: 2px solid #000; padding: 0 13px; background: #fff; color: #000; }
.who { flex: 0 0 295px; }
.msg { flex: 1; }
.chat-bar input::placeholder { color: #757575; }
```
